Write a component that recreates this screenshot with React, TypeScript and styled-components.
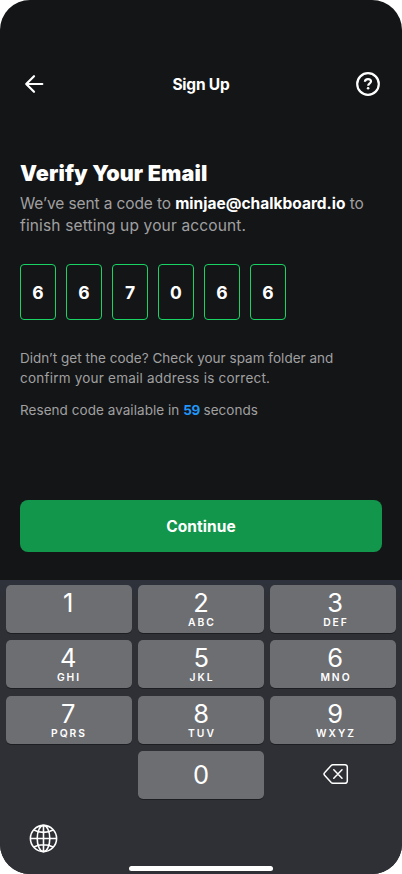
import React from "react";
import styled, { createGlobalStyle } from "styled-components";

const Global = createGlobalStyle`
  *, *::before, *::after { box-sizing: border-box; }
  html, body { margin: 0; background: #fff; }
  button { border: 0; padding: 0; margin: 0; background: none; color: inherit; font: inherit; }
  p, h1, h2 { margin: 0; }
`;

const Screen = styled.main`
  width: 402px;
  height: 874px;
  display: flex;
  flex-direction: column;
  overflow: hidden;
  border-radius: 30px;
  background: #141517;
  color: #fff;
  font-family: Inter, "Liberation Sans", sans-serif;
`;

const Header = styled.header`
  display: grid;
  grid-template-columns: 28px 1fr 28px;
  align-items: center;
  height: 28px;
  margin: 70px 20px 0;
`;

const IconButton = styled.button`
  display: flex;
  width: 28px;
  height: 28px;
`;

const Title = styled.h1`
  padding-top: 2px;
  font-size: 15.5px;
  font-weight: 700;
  line-height: 26px;
  letter-spacing: -0.2px;
  text-align: center;
`;

const Content = styled.section`
  flex: 1;
  display: flex;
  flex-direction: column;
  padding: 60px 20px 28px;
`;

const Heading = styled.h2`
  font-size: 21.5px;
  font-weight: 900;
  line-height: 30px;
  letter-spacing: 0.14px;
  white-space: nowrap;
`;

const Line = styled.span<{ $track: number }>`
  display: block;
  letter-spacing: ${(p) => p.$track}px;
  white-space: nowrap;
`;

const Intro = styled.p`
  margin-top: 5px;
  color: #a0a0a1;
  font-size: 15.5px;
  line-height: 22px;
`;

const Email = styled.strong`
  color: #fff;
  font-weight: 700;
  letter-spacing: 0.01px;
`;

const Code = styled.div`
  display: flex;
  gap: 10px;
  margin-top: 27px;
`;

const Digit = styled.div`
  width: 36px;
  height: 56px;
  border: 1px solid #19d465;
  border-radius: 4px;
  font-size: 17.5px;
  font-weight: 700;
  line-height: 55px;
  text-align: center;
`;

const Hint = styled.p<{ $gap: number }>`
  margin-top: ${(p) => p.$gap}px;
  color: #a0a0a1;
  font-size: 13.5px;
  line-height: 20px;
`;

const Seconds = styled.strong`
  color: #2196f8;
  font-weight: 700;
  letter-spacing: -0.5px;
`;

const Continue = styled.button`
  height: 52px;
  margin-top: auto;
  border-radius: 8px;
  background: #11964b;
  font-size: 15.5px;
  font-weight: 700;
  letter-spacing: 0.05px;
`;

const Keyboard = styled.section`
  height: 294px;
  display: flex;
  flex-direction: column;
  padding: 5px 6px 0;
  background: linear-gradient(#2e323c, #2f3035 24px);
`;

const Keys = styled.div`
  display: grid;
  grid-template-columns: repeat(3, 126px);
  grid-auto-rows: 48px;
  gap: 7.33px 6px;
`;

const Key = styled.button<{ $pad?: string }>`
  display: flex;
  flex-direction: column;
  align-items: center;
  padding: ${(p) => p.$pad ?? "3px 0 0"};
  border-radius: 5px;
  background: #6d6e72;
  box-shadow: 0 1px 0 #1d1e21;
`;

const Numeral = styled.span`
  font-size: 25.5px;
  font-weight: 400;
  line-height: 29px;
  letter-spacing: -0.3px;
`;

const Letters = styled.span`
  padding-left: 2px;
  font-size: 10.3px;
  font-weight: 600;
  line-height: 10px;
  letter-spacing: 2px;
`;

const Delete = styled.button`
  grid-column: 3;
  display: flex;
  align-items: center;
  justify-content: center;
  padding: 0 0 2px 6px;
`;

const BottomBar = styled.div`
  flex: 1;
  display: flex;
  flex-direction: column;
  justify-content: space-between;
  padding: 25px 0 3.5px 23px;
`;

const HomeIndicator = styled.div`
  width: 144px;
  height: 5px;
  margin-left: 100px;
  border-radius: 3px;
  background: #fff;
`;

const rows: [string, string][] = [
  ["1", ""], ["2", "ABC"], ["3", "DEF"],
  ["4", "GHI"], ["5", "JKL"], ["6", "MNO"],
  ["7", "PQRS"], ["8", "TUV"], ["9", "WXYZ"],
];

// Labels in the outer columns sit slightly off the centre of their keys.
const columnPadding = ["3px 2px 0 0", "3px 0 0", "3px 0 0 4px"];

const ZeroKey = styled(Key)`
  grid-column: 2;
`;

const BackIcon = () => (
  <svg width="28" height="28" viewBox="0 0 28 28" fill="none" stroke="#fff" strokeWidth="2.2" strokeLinecap="round" strokeLinejoin="round">
    <path d="M22.3 14H6.2M14 6.2 6.2 14l7.8 7.8" />
  </svg>
);

const HelpIcon = () => (
  <svg width="28" height="28" viewBox="0 0 28 28" fill="none" stroke="#fff" strokeWidth="2.2" strokeLinecap="round" strokeLinejoin="round">
    <circle cx="14" cy="14" r="10.8" />
    <path strokeLinecap="butt" d="M10.9 11.8c.1-1.7 1.3-2.7 3.1-2.7s3 1 3 2.5c0 1.8-2.8 1.9-2.8 4.2" />
    <circle cx="14.1" cy="18.3" r="1.3" fill="#fff" stroke="none" />
  </svg>
);

const DeleteIcon = () => (
  <svg width="26" height="22" viewBox="0 0 26 22" fill="none" stroke="#fff" strokeWidth="1.5" strokeLinecap="round" strokeLinejoin="round">
    <path d="M9.8 1.7H22a2.3 2.3 0 0 1 2.3 2.3v14a2.3 2.3 0 0 1-2.3 2.3H9.8a2.3 2.3 0 0 1-1.6-.7l-6.4-7a2.3 2.3 0 0 1 0-3.2l6.4-7a2.3 2.3 0 0 1 1.6-.7ZM10.8 6.8l8.2 8.4M19 6.8l-8.2 8.4" />
  </svg>
);

const GlobeIcon = () => (
  <svg width="29" height="29" viewBox="0 0 29 29" fill="none" stroke="#fff" strokeWidth="1.6">
    <circle cx="14.5" cy="14.5" r="13.1" />
    <ellipse cx="14.5" cy="14.5" rx="6.3" ry="13.1" />
    <path d="M14.5 1.3v26.4M1.3 14.5h26.4M5 6c5.3 3.1 13.7 3.1 19 0M5 23c5.3-3.1 13.7-3.1 19 0" />
  </svg>
);

export default function App() {
  return (
    <>
      <Global />
      <Screen>
        <Header>
          <IconButton aria-label="Back"><BackIcon /></IconButton>
          <Title>Sign Up</Title>
          <IconButton aria-label="Help"><HelpIcon /></IconButton>
        </Header>
        <Content>
          <Heading>Verify Your Email</Heading>
          <Intro>
            <Line $track={-0.12}>We’ve sent a code to <Email>minjae@chalkboard.io</Email> to</Line>
            <Line $track={0.15}>finish setting up your account.</Line>
          </Intro>
          <Code>
            {["6", "6", "7", "0", "6", "6"].map((d, i) => <Digit key={i}>{d}</Digit>)}
          </Code>
          <Hint $gap={28}>
            <Line $track={0.02}>Didn’t get the code? Check your spam folder and</Line>
            <Line $track={0.22}>confirm your email address is correct.</Line>
          </Hint>
          <Hint $gap={12}>
            <Line $track={0.05}>Resend code available in <Seconds>59</Seconds> seconds</Line>
          </Hint>
          <Continue>Continue</Continue>
        </Content>
        <Keyboard>
          <Keys>
            {rows.map(([n, l], i) => (
              <Key key={n} $pad={columnPadding[i % 3]}>
                <Numeral>{n}</Numeral>
                {l && <Letters>{l}</Letters>}
              </Key>
            ))}
            <ZeroKey $pad="9px 0 0"><Numeral>0</Numeral></ZeroKey>
            <Delete aria-label="Delete"><DeleteIcon /></Delete>
          </Keys>
          <BottomBar>
            <GlobeIcon />
            <HomeIndicator />
          </BottomBar>
        </Keyboard>
      </Screen>
    </>
  );
}
